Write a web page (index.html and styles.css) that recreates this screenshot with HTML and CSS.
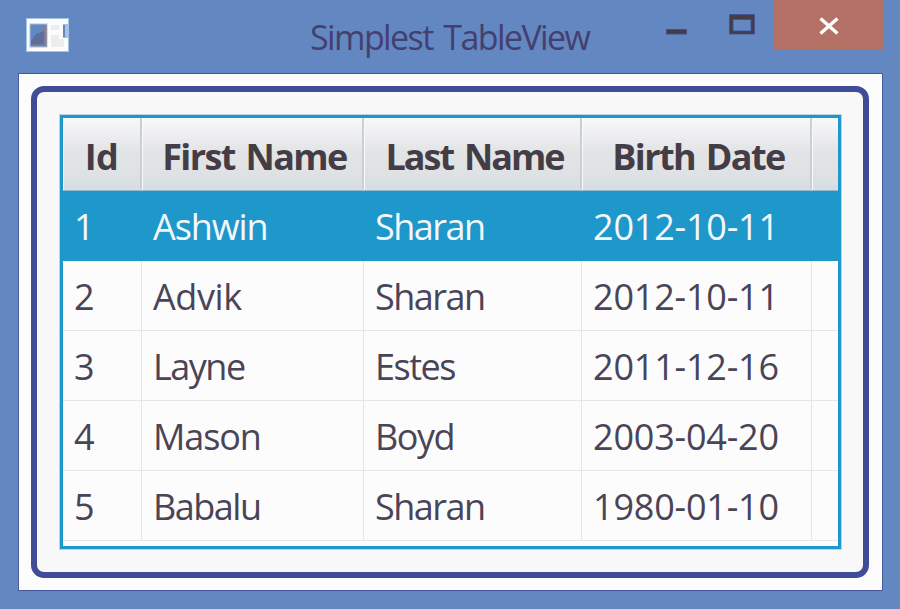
FILE: index.html
```html
<!DOCTYPE html>
<html lang="en">
<head>
<meta charset="utf-8">
<title>Simplest TableView</title>
<link rel="stylesheet" href="styles.css">
</head>
<body>
<div class="window">
  <header class="titlebar">
    <svg class="app-icon" width="44" height="38" viewBox="0 0 44 38">
      <rect x=".5" y="1.500" width="42" height="33" fill="#fcfcfc" stroke="#a5c4df"/>
      <rect x="4" y="7" width="17" height="23" fill="#6387c1" stroke="#a5c4df"/>
      <path d="M5 28V24L10 17L18 14V28Z" fill="#5b6ea0"/>
      <path d="M18 9H21V29H6V27H18Z" fill="#b57165" opacity=".45"/>
      <path d="M25 8H33V13H25ZM25 18H33V22H38V30H25Z" fill="#eceeee"/>
      <path d="M37 7H43V21H37Z" fill="#a5c4df"/>
      <path d="M37 8H39V20H37Z" fill="#6387c1"/>
    </svg>
    <h1 class="title"><span class="title-text">Simplest TableView</span></h1>
    <svg class="minimize" width="22" height="6" viewBox="0 0 22 6"><rect x=".5" y=".5" width="20" height="4.500" fill="#453d45" stroke="#414c98"/></svg>
    <svg class="maximize" width="26" height="21" viewBox="0 0 26 21"><path fill="#453d45" stroke="#414c98" stroke-width=".8" fill-rule="evenodd" d="M.5.500H25.500V20H.5ZM4 5.500V17H22V5.500Z"/></svg>
    <div class="close"><svg width="20" height="18" viewBox="0 0 20 18"><path d="M1.500 1.500L18.500 16.500M18.500 1.500L1.500 16.500" stroke="#fcfcfc" stroke-width="3.400"/></svg></div>
  </header>
  <main class="content">
    <div class="frame">
      <div class="table">
        <div class="row head"><span class="cell"><b class="h-id">Id</b></span><span class="cell"><b class="h-first">First Name</b></span><span class="cell"><b class="h-last">Last Name</b></span><span class="cell"><b class="h-birth">Birth Date</b></span><span class="cell"></span></div>
        <div class="row selected"><span class="cell">1</span><span class="cell first">Ashwin</span><span class="cell">Sharan</span><span class="cell date">2012-10-11</span><span class="cell"></span></div>
        <div class="row"><span class="cell">2</span><span class="cell first advik">Advik</span><span class="cell">Sharan</span><span class="cell date">2012-10-11</span><span class="cell"></span></div>
        <div class="row"><span class="cell">3</span><span class="cell">Layne</span><span class="cell">Estes</span><span class="cell date">2011-12-16</span><span class="cell"></span></div>
        <div class="row"><span class="cell">4</span><span class="cell first">Mason</span><span class="cell">Boyd</span><span class="cell date">2003-04-20</span><span class="cell"></span></div>
        <div class="row"><span class="cell">5</span><span class="cell">Babalu</span><span class="cell">Sharan</span><span class="cell date">1980-01-10</span><span class="cell"></span></div>
      </div>
    </div>
  </main>
</div>
</body>
</html>
```

FILE: styles.css
```css
* { box-sizing: border-box; }
body { margin: 0; font-family: "Open Sans", "Noto Sans", sans-serif; }
.window { width: 900px; height: 609px; background: #6387c1; padding: 0 17px 18px 18px; display: flex; flex-direction: column; overflow: hidden; }
.titlebar { height: 73px; flex: none; display: flex; align-items: flex-start; }
.app-icon { margin: 17px 0 0 8px; flex: none; }
.title { flex: 1; margin: 14px 0 0 240px; font-size: 34px; line-height: 46px; font-weight: 400; color: #453f70; white-space: nowrap; }
.title-text { letter-spacing: -1.6px; word-spacing: 3.400px; }
.minimize { margin: 28.500px 0 0; flex: none; }
.maximize { margin: 14px 0 0 41px; flex: none; }
.close { width: 110px; height: 49px; margin: 0 0 0 18px; flex: none; background: #b57165; display: flex; justify-content: center; align-items: center; padding: 2px 0 0 2px; }
.content { flex: 1; background: #fcfcfc; border: 1px solid #47589f; padding: 12px 13px 12px 12px; }
.frame { height: 100%; border: 6px solid #414c98; border-radius: 13px; background: #f8f8f9; padding: 23px 22px 0 23px; }
.table { height: 434px; border: 3px solid #1e98cb; background: #fcfcfc; box-shadow: 0 0 0 1px #bcd3e1; }
.row { display: grid; grid-template-columns: 79px 222px 218px 230px 1fr; grid-template-rows: 100%; height: 70px; font-size: 36px; line-height: 71px; color: #4a4457; }
.cell { border-right: 1px solid #e5e6e8; border-bottom: 1px solid #e5e6e8; padding-left: 11px; white-space: nowrap; letter-spacing: -1.5px; }
.cell:last-child { border-right: 0; }
.first { letter-spacing: -1.1px; }
.advik { letter-spacing: -.4px; }
.date { letter-spacing: -.2px; }
.head { height: 73px; line-height: 77px; color: #453d45; background: linear-gradient(#f9f9fa, #e3e4e6 45%, #dfe2e5 75%, #d5dde3); }
.head .cell { border-right: 2px solid #c7d0d8; border-bottom: 1px solid #94b8cc; padding: 0 0 0 5px; text-align: center; box-shadow: inset 1px 1px #fafafa; }
.head .cell:first-child { padding: 0; }
.head .cell:last-child { border-right: 0; }
.head b { font-weight: 700; letter-spacing: -1.6px; word-spacing: 3px; }
.head .h-id { letter-spacing: -.5px; }
.head .h-last { letter-spacing: -2px; word-spacing: 3.500px; }
.selected { background: #1e98cb; color: #f3f7fa; }
.selected .cell { border-color: #1e98cb; }
```
